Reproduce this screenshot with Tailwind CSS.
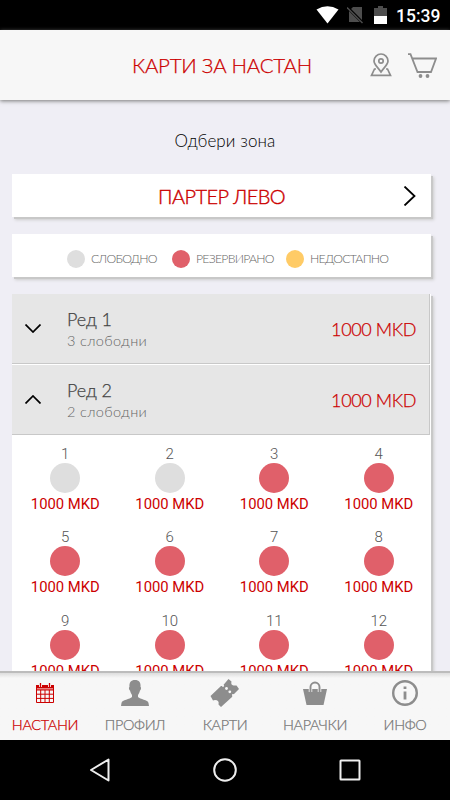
<!DOCTYPE html>
<html lang="mk">
<head>
  <meta charset="UTF-8">
  <meta name="viewport" content="width=device-width, initial-scale=1.0">
  <title>Карти за настан</title>
  <script src="https://cdn.jsdelivr.net/npm/@tailwindcss/browser@4"></script>
</head>
<body class="bg-[#efeef5] font-['Lato','Open_Sans',sans-serif] h-[800px] w-[450px] overflow-hidden flex flex-col">

  <!-- Status bar -->
  <div class="h-[30px] shrink-0 bg-black flex items-center justify-end pr-[9px] font-['Roboto',sans-serif]">
    <svg class="w-[23px] h-[18px] mr-2" viewBox="0 0 23 18"><path d="M0.5 3.5Q11.500-3 22.500 3.500L11.500 17.500Z" fill="#fff"/></svg>
    <svg class="w-[17px] h-[18px] mr-[10px]" viewBox="0 0 17 18"><path d="M6 1H15V16H2V5Z" fill="#4d4d4d"/><path d="M0 1L16 17" stroke="#000" stroke-width="3"/><path d="M0 1.500L15.500 17" stroke="#4d4d4d" stroke-width="1.500"/></svg>
    <svg class="w-[13px] h-[18px] mr-[9px]" viewBox="0 0 13 18"><path d="M0 2H4V0H9V2H13V10H0Z" fill="#4d4d4d"/><path d="M0 10H13V18H0Z" fill="#fff"/></svg>
    <span class="text-white text-[17.500px] font-medium leading-[30px] pt-0.5 w-[45px] whitespace-nowrap">15:39</span>
  </div>

  <!-- Header -->
  <header class="h-[70px] shrink-0 bg-[#f7f7f7] grid grid-cols-[118px_1fr_118px] items-center z-10 shadow-[0_1px_4px_#777]">
    <div></div>
    <h1 class="text-[20.500px] font-light [-webkit-text-stroke:0.25px] tracking-[-0.25px] text-[#cc0000] text-center whitespace-nowrap pr-1.5">КАРТИ ЗА НАСТАН</h1>
    <div class="flex items-center justify-end pr-[13px] gap-4">
      <svg class="w-[22px] h-[24px]" viewBox="0 0 22 24" fill="none" stroke="#8d8d8d" stroke-width="1.700"><path d="M11 19C8 14.500 4 11.500 4 8A7 7 0 0 1 18 8C18 11.500 14 14.500 11 19Z"/><circle cx="11" cy="8" r="2.200"/><path d="M6 16H4.500L1.500 22.300H20.500L17.500 16H16"/></svg>
      <svg class="w-[29px] h-[25px]" viewBox="0 0 29 25" fill="none" stroke="#8d8d8d" stroke-width="1.800"><path d="M0 1.200H2.500L9.500 19H23L28 5.500H4.300"/><circle cx="12.500" cy="23" r="1.900" fill="#8d8d8d" stroke="none"/><circle cx="19.500" cy="23" r="1.900" fill="#8d8d8d" stroke="none"/></svg>
    </div>
  </header>

  <!-- Main content -->
  <main class="flex-1 min-h-0 overflow-hidden pl-3 pr-[19px]">
    <p class="h-[74px] pt-[7px] flex items-center justify-center text-[17px] font-light tracking-[0.1px] text-black pl-[7px]">Одбери зона</p>

    <!-- Zone picker -->
    <section class="h-[43px] bg-white flex items-center pr-[15px] shadow-[2px_2px_0_#c8c8c8,3px_3px_3px_#ccc]">
      <h2 class="flex-1 text-center text-[20px] font-light [-webkit-text-stroke:0.4px] tracking-[-0.6px] text-[#cc0000] pl-[28px]">ПАРТЕР ЛЕВО</h2>
      <svg class="w-[13px] h-5" viewBox="0 0 13 20" fill="none" stroke="#000" stroke-width="1.800"><path d="M1.500 0.500L11.500 10L1.500 19.500"/></svg>
    </section>

    <!-- Legend -->
    <section class="mt-[17px] h-[43px] bg-white flex items-center pl-[55px] pt-[7px] text-[12.300px] font-light tracking-[-0.75px] text-[#666] shadow-[2px_2px_0_#c8c8c8,3px_3px_3px_#ccc]">
      <span class="size-[18px] rounded-full bg-[#dedede]"></span>
      <span class="ml-1.5 w-[81px] whitespace-nowrap">СЛОБОДНО</span>
      <span class="size-[18px] rounded-full bg-[#e0606a]"></span>
      <span class="ml-1.5 w-[90px] whitespace-nowrap">РЕЗЕРВИРАНО</span>
      <span class="size-[18px] rounded-full bg-[#ffcb66]"></span>
      <span class="ml-1.5 whitespace-nowrap">НЕДОСТАПНО</span>
    </section>

    <!-- Rows -->
    <section class="mt-[17px] h-[400px] bg-white shadow-[2px_2px_0_#c8c8c8,3px_3px_3px_#ccc]">
      <div class="h-[70px] w-[418px] bg-[#e6e6e6] border-b border-r border-[#c8c8c8] flex items-center pl-[13px] pr-[13px]">
        <svg class="w-4 h-[9px]" viewBox="0 0 16 9" fill="none" stroke="#000" stroke-width="1.700"><path d="M0.500 0.500L8 8L15.500 0.500"/></svg>
        <div class="ml-[26px] flex-1 pt-0.5">
          <h3 class="text-[18px] leading-[22px] font-light [-webkit-text-stroke:0.25px] tracking-[-0.1px] text-[#444]">Ред 1</h3>
          <p class="text-[14.500px] leading-[22px] font-light tracking-[0.35px] text-[#666]">3 слободни</p>
        </div>
        <span class="text-[18px] font-light [-webkit-text-stroke:0.25px] tracking-[-0.4px] pt-px text-[#cc0000]">1000 MKD</span>
      </div>
      <div class="mt-px h-[70px] w-[418px] bg-[#e6e6e6] border-b border-r border-[#c8c8c8] flex items-center pl-[13px] pr-[13px]">
        <svg class="w-4 h-[9px]" viewBox="0 0 16 9" fill="none" stroke="#000" stroke-width="1.700"><path d="M0.500 8.500L8 1L15.500 8.500"/></svg>
        <div class="ml-[26px] flex-1 pt-0.5">
          <h3 class="text-[18px] leading-[22px] font-light [-webkit-text-stroke:0.25px] tracking-[-0.1px] text-[#444]">Ред 2</h3>
          <p class="text-[14.500px] leading-[22px] font-light tracking-[0.35px] text-[#666]">2 слободни</p>
        </div>
        <span class="text-[18px] font-light [-webkit-text-stroke:0.25px] tracking-[-0.4px] pt-px text-[#cc0000]">1000 MKD</span>
      </div>

      <!-- Seats -->
      <div id="seats" class="grid grid-cols-4 auto-rows-[83.300px] pt-[10px] pl-px font-['Roboto',sans-serif]"></div>
    </section>
  </main>

  <!-- Tabs -->
  <nav class="h-[69px] shrink-0 bg-[#f7f7f7] bg-linear-to-b from-[#dddddd] to-[#f7f7f7] to-[5px] grid grid-cols-5 z-10 text-[14.500px] tracking-[-0.35px] font-light text-[#777] border-t-2 border-[#bcbcbc]">
    <a href="#" class="flex flex-col items-center text-[#cc0000]">
      <span class="h-10 flex items-center"><svg class="w-[18px] h-5" viewBox="0 0 18 20"><path d="M0 2H18V5H0Z" fill="#cc0000"/><path d="M0 5H18V7H0Z" fill="#e88080"/><path d="M4.500 0V4M13.500 0V4" stroke="#f7f7f7" stroke-width="3"/><path d="M4.500 0V4M13.500 0V4" stroke="#cc0000" stroke-width="1.300"/><path d="M0.500 5V19.500H17.500V5M0.500 7H17.500M0.500 11.200H17.500M0.500 15.400H17.500M4.700 7V19M9 7V19M13.300 7V19" fill="none" stroke="#cc0000"/></svg></span>
      <span class="leading-[23px] [-webkit-text-stroke:0.25px]">НАСТАНИ</span>
    </a>
    <a href="#" class="flex flex-col items-center">
      <span class="h-10 flex items-center"><svg class="w-7 h-[26px]" viewBox="0 0 28 26" fill="#8d8d8d"><path d="M14 0C18 0 20 2.500 19.500 7C20.500 7 20 10 19 10.500C18.500 13 17.500 14 17 15V17C19 19.500 27 19.500 27.500 23L28 26H0L0.500 23C1 19.500 9 19.500 11 17V15C10.500 14 9.500 13 9 10.500C8 10 7.500 7 8.500 7C8 2.500 10 0 14 0Z"/></svg></span>
      <span class="leading-[23px] [-webkit-text-stroke:0.25px]">ПРОФИЛ</span>
    </a>
    <a href="#" class="flex flex-col items-center">
      <span class="h-10 flex items-center"><svg class="w-[30px] h-[30px]" viewBox="0 0 30 30"><path d="M0.500 18L11 8L12.500 8L18.500 1L21.500 3.500Q20.500 7 23.500 7.500L26.500 7.500L29 11L22.500 17.500L22 19L11 29L8.500 26.500Q9.500 22 5 22L3 22.500Z" fill="#8d8d8d"/><g fill="#f7f7f7"><circle cx="13" cy="7.800" r="1.100"/><circle cx="16.500" cy="10.500" r="1.400"/><circle cx="19.800" cy="13.800" r="1.400"/><circle cx="23" cy="17" r="1.100"/></g></svg></span>
      <span class="leading-[23px] [-webkit-text-stroke:0.25px]">КАРТИ</span>
    </a>
    <a href="#" class="flex flex-col items-center">
      <span class="h-10 flex items-center"><svg class="w-6 h-6" viewBox="0 0 24 24"><path d="M0 8H24L20.500 24H3.500Z" fill="#8d8d8d"/><path d="M7.500 11V6A4.500 4.500 0 0 1 16.500 6V11" fill="none" stroke="#f7f7f7" stroke-width="3.500"/><path d="M7.500 11V6A4.500 4.500 0 0 1 16.500 6V11" fill="none" stroke="#8d8d8d" stroke-width="1.900"/></svg></span>
      <span class="leading-[23px] [-webkit-text-stroke:0.25px]">НАРАЧКИ</span>
    </a>
    <a href="#" class="flex flex-col items-center">
      <span class="h-10 flex items-center"><svg class="size-[26px]" viewBox="0 0 26 26"><circle cx="13" cy="13" r="11.800" fill="none" stroke="#8d8d8d" stroke-width="2.400"/><path d="M13 6.500V9M13 11.500V19.500" stroke="#8d8d8d" stroke-width="2.800"/></svg></span>
      <span class="leading-[23px] [-webkit-text-stroke:0.25px]">ИНФО</span>
    </a>
  </nav>

  <!-- Android buttons -->
  <div class="h-[60px] shrink-0 bg-black flex items-center justify-between pl-[88px] pr-[88px]">
    <svg class="size-6" viewBox="0 0 24 24" fill="none" stroke="#eee" stroke-width="2" stroke-linejoin="round"><path d="M20.500 1.500V22.500L3 12Z"/></svg>
    <svg class="size-6" viewBox="0 0 24 24" fill="none" stroke="#eee" stroke-width="2"><circle cx="12" cy="12" r="10.800"/></svg>
    <svg class="size-6" viewBox="0 0 24 24" fill="none" stroke="#eee" stroke-width="2"><rect x="2.500" y="2.500" width="19" height="19" rx="0.500"/></svg>
  </div>

  <script>
    const freeSeats = [1, 2];
    const seats = document.getElementById("seats");

    for (let n = 1; n <= 12; n++) {
      const seat = document.createElement("div");
      seat.className = "flex flex-col items-center";
      const color = freeSeats.includes(n) ? "bg-[#dedede]" : "bg-[#e0606a]";
      seat.innerHTML = `
        <span class="text-[15px] leading-[18px] font-light text-[#555]">${n}</span>
        <span class="size-[30px] rounded-full ${color}"></span>
        <span class="text-[14.800px] leading-[23px] text-[#cc0000]">1000 MKD</span>
      `;
      seats.appendChild(seat);
    }
  </script>

</body>
</html>
